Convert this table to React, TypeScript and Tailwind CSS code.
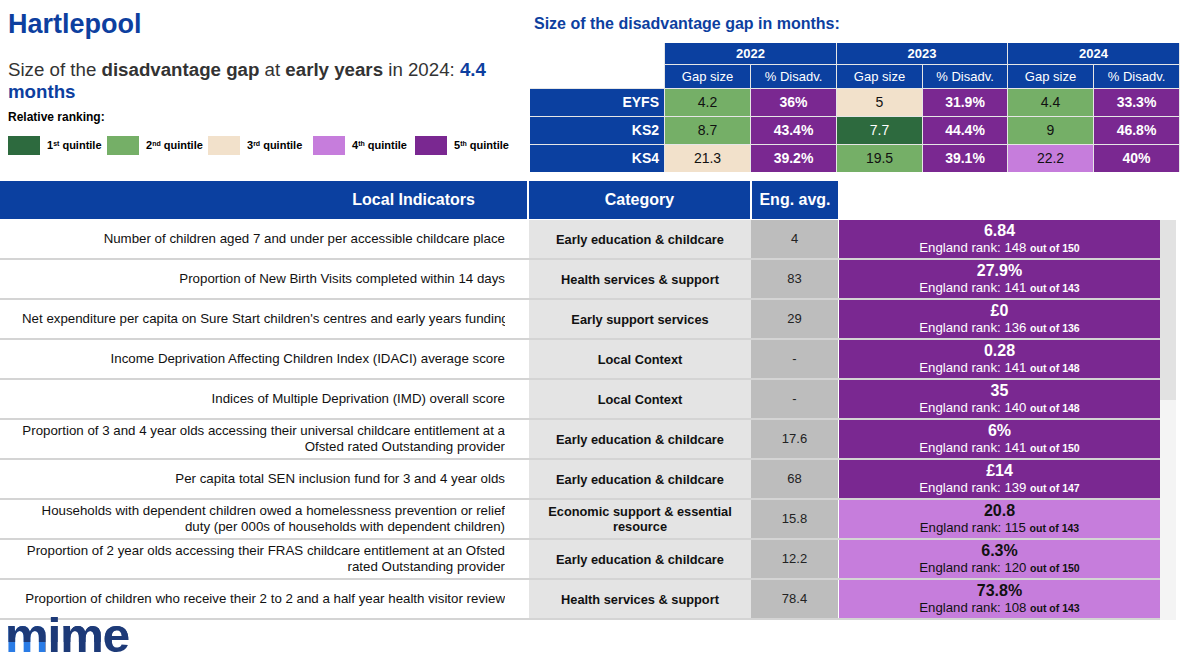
import React from "react"

const quintile: Record<number, string> = {
  1: "bg-[#2d6a3e] text-white",
  2: "bg-[#75af67] text-[#111]",
  3: "bg-[#f2e1cb] text-[#111]",
  4: "bg-[#c67ddc] text-[#111]",
  5: "bg-[#7a2891] text-white",
}

const legend = [
  { n: "1", sup: "st", w: "w-[99px]", c: "bg-[#2d6a3e]" },
  { n: "2", sup: "nd", w: "w-[101px]", c: "bg-[#75af67]" },
  { n: "3", sup: "rd", w: "w-[105px]", c: "bg-[#f2e1cb]" },
  { n: "4", sup: "th", w: "w-[102px]", c: "bg-[#c67ddc]" },
  { n: "5", sup: "th", w: "w-[100px]", c: "bg-[#7a2891]" },
]

const gaps = [
  { label: "EYFS", cells: [["4.2", 2], ["36%", 5], ["5", 3], ["31.9%", 5], ["4.4", 2], ["33.3%", 5]] },
  { label: "KS2", cells: [["8.7", 2], ["43.4%", 5], ["7.7", 1], ["44.4%", 5], ["9", 2], ["46.8%", 5]] },
  { label: "KS4", cells: [["21.3", 3], ["39.2%", 5], ["19.5", 2], ["39.1%", 5], ["22.2", 4], ["40%", 5]] },
] as const

const indicators = [
  { ind: ["Number of children aged 7 and under per accessible childcare place"], cat: ["Early education & childcare"], avg: "4", val: "6.84", rank: "148", of: "150", q: 5 },
  { ind: ["Proportion of New Birth Visits completed within 14 days"], cat: ["Health services & support"], avg: "83", val: "27.9%", rank: "141", of: "143", q: 5 },
  { ind: ["Net expenditure per capita on Sure Start children's centres and early years funding"], cat: ["Early support services"], avg: "29", val: "£0", rank: "136", of: "136", q: 5 },
  { ind: ["Income Deprivation Affecting Children Index (IDACI) average score"], cat: ["Local Context"], avg: "-", val: "0.28", rank: "141", of: "148", q: 5 },
  { ind: ["Indices of Multiple Deprivation (IMD) overall score"], cat: ["Local Context"], avg: "-", val: "35", rank: "140", of: "148", q: 5 },
  { ind: ["Proportion of 3 and 4 year olds accessing their universal childcare entitlement at a", "Ofsted rated Outstanding provider"], cat: ["Early education & childcare"], avg: "17.6", val: "6%", rank: "141", of: "150", q: 5 },
  { ind: ["Per capita total SEN inclusion fund for 3 and 4 year olds"], cat: ["Early education & childcare"], avg: "68", val: "£14", rank: "139", of: "147", q: 5 },
  { ind: ["Households with dependent children owed a homelessness prevention or relief", "duty (per 000s of households with dependent children)"], cat: ["Economic support & essential", "resource"], avg: "15.8", val: "20.8", rank: "115", of: "143", q: 4 },
  { ind: ["Proportion of 2 year olds accessing their FRAS childcare entitlement at an Ofsted", "rated Outstanding provider"], cat: ["Early education & childcare"], avg: "12.2", val: "6.3%", rank: "120", of: "150", q: 4 },
  { ind: ["Proportion of children who receive their 2 to 2 and a half year health visitor review"], cat: ["Health services & support"], avg: "78.4", val: "73.8%", rank: "108", of: "143", q: 4 },
]

export default function App() {
  return (
    <div className="w-[1180px] h-[658px] overflow-hidden bg-white font-['Liberation_Sans',Arial,sans-serif] text-[#222]">

      {/* Top */}
      <div className="flex h-[181px]">

        <div className="w-[530px] shrink-0 pl-[8px]">
          <h1 className="mt-[9px] text-[27px] font-bold leading-[30px] text-[#0d3f9f]">Hartlepool</h1>

          <p className="mt-[20px] text-[18.7px] leading-[22px] text-[#333]">
            Size of the <b>disadvantage gap</b> at <b>early years</b> in 2024: <b className="text-[#0d3f9f]">4.4</b>
            <br />
            <b className="text-[#0d3f9f]">months</b>
          </p>

          <p className="mt-[6px] text-[12px] font-bold leading-[16px] text-black">Relative ranking:</p>

          <div className="mt-[11px] flex items-center">
            {legend.map((l) => (
              <div key={l.n} className={`${l.w} flex shrink-0 items-center gap-[7px]`}>
                <div className={`h-[19px] w-[32px] ${l.c}`} />
                <span className="text-[11px] font-bold text-black">
                  {l.n}
                  <sup className="text-[7px]">{l.sup}</sup> quintile
                </span>
              </div>
            ))}
          </div>
        </div>

        <div className="flex-1">
          <h2 className="mt-[15px] pl-[4px] text-[16px] font-bold leading-[18px] text-[#0d3f9f]">
            Size of the disadvantage gap in months:
          </h2>

          <div className="mt-[10px] grid grid-cols-[134px_85px_85px_85px_84px_85px_85px] grid-rows-[21px_23px_27px_27px_27px] gap-px bg-[#e6e6e6] text-[13px]">
            <div className="row-span-2 bg-white" />
            {["2022", "2023", "2024"].map((y) => (
              <div key={y} className="col-span-2 flex items-center justify-center bg-[#0b40a0] font-bold text-white">{y}</div>
            ))}
            {["Gap size", "% Disadv.", "Gap size", "% Disadv.", "Gap size", "% Disadv."].map((h, i) => (
              <div key={i} className="flex items-center justify-center bg-[#0b40a0] text-white">{h}</div>
            ))}
            {gaps.map((r) => (
              <React.Fragment key={r.label}>
                <div className="flex items-center justify-end bg-[#0b40a0] pr-[5px] text-[14px] font-bold text-white">{r.label}</div>
                {r.cells.map(([v, q], i) => (
                  <div key={i} className={`flex items-center justify-center text-[14px] ${quintile[q]} ${i % 2 ? "font-bold" : ""}`}>{v}</div>
                ))}
              </React.Fragment>
            ))}
          </div>
        </div>
      </div>

      {/* Indicators header */}
      <div className="flex h-[38px] text-[16px] font-bold text-white">
        <div className="flex w-[527px] items-center justify-end bg-[#0b40a0] pr-[52px]">Local Indicators</div>
        <div className="ml-[2px] flex w-[221px] items-center justify-center bg-[#0b40a0]">Category</div>
        <div className="ml-[2px] flex w-[86px] items-center justify-center bg-[#0b40a0]">Eng. avg.</div>
      </div>

      {/* Indicators body */}
      <div className="mt-px flex">
        <div className="w-[1160px]">
          {indicators.map((r, i) => (
            <div key={i} className="flex h-[40px] border-b-2 border-[#d4d4d4]">
              <div className="flex w-[529px] flex-col justify-center pl-[22px] pr-[24px] text-[13.3px] leading-[16px] text-[#111]">
                {r.ind.map((t, j) => (
                  <div key={j} className="w-full overflow-hidden whitespace-nowrap text-right">{t}</div>
                ))}
              </div>
              <div className="flex w-[222px] flex-col items-center justify-center bg-[#e4e4e4] text-[12.8px] font-bold leading-[15px] text-[#111]">
                {r.cat.map((t, j) => (
                  <div key={j}>{t}</div>
                ))}
              </div>
              <div className="flex w-[87px] items-center justify-center bg-[#bdbdbd] text-[13px] text-[#222]">{r.avg}</div>
              <div className={`ml-px flex w-[321px] flex-col items-center justify-center ${quintile[r.q]}`}>
                <div className="text-[16px] font-bold leading-[17px]">{r.val}</div>
                <div className="text-[13.2px] leading-[17px]">
                  England rank: {r.rank} <span className="text-[10.5px] font-bold">out of {r.of}</span>
                </div>
              </div>
            </div>
          ))}
        </div>
        <div className="flex w-[16px] flex-col">
          <div className="h-[180px] bg-[#e2e2e2]" />
          <div className="flex-1 bg-[#f4f4f4]" />
        </div>
      </div>

      {/* Logo */}
      <div className="mt-[-7px] pl-[5px]">
        <span className="inline-block bg-clip-text bg-no-repeat text-[49px] font-bold leading-[44px] tracking-[-1px] text-transparent [background-image:linear-gradient(#1d3a78,#1d3a78),linear-gradient(90deg,#2a7ce6_0_32%,#1d3a78_32%)] [background-position:top,top] [background-size:100%_66%,100%_100%]">
          mime
        </span>
      </div>
    </div>
  )
}
